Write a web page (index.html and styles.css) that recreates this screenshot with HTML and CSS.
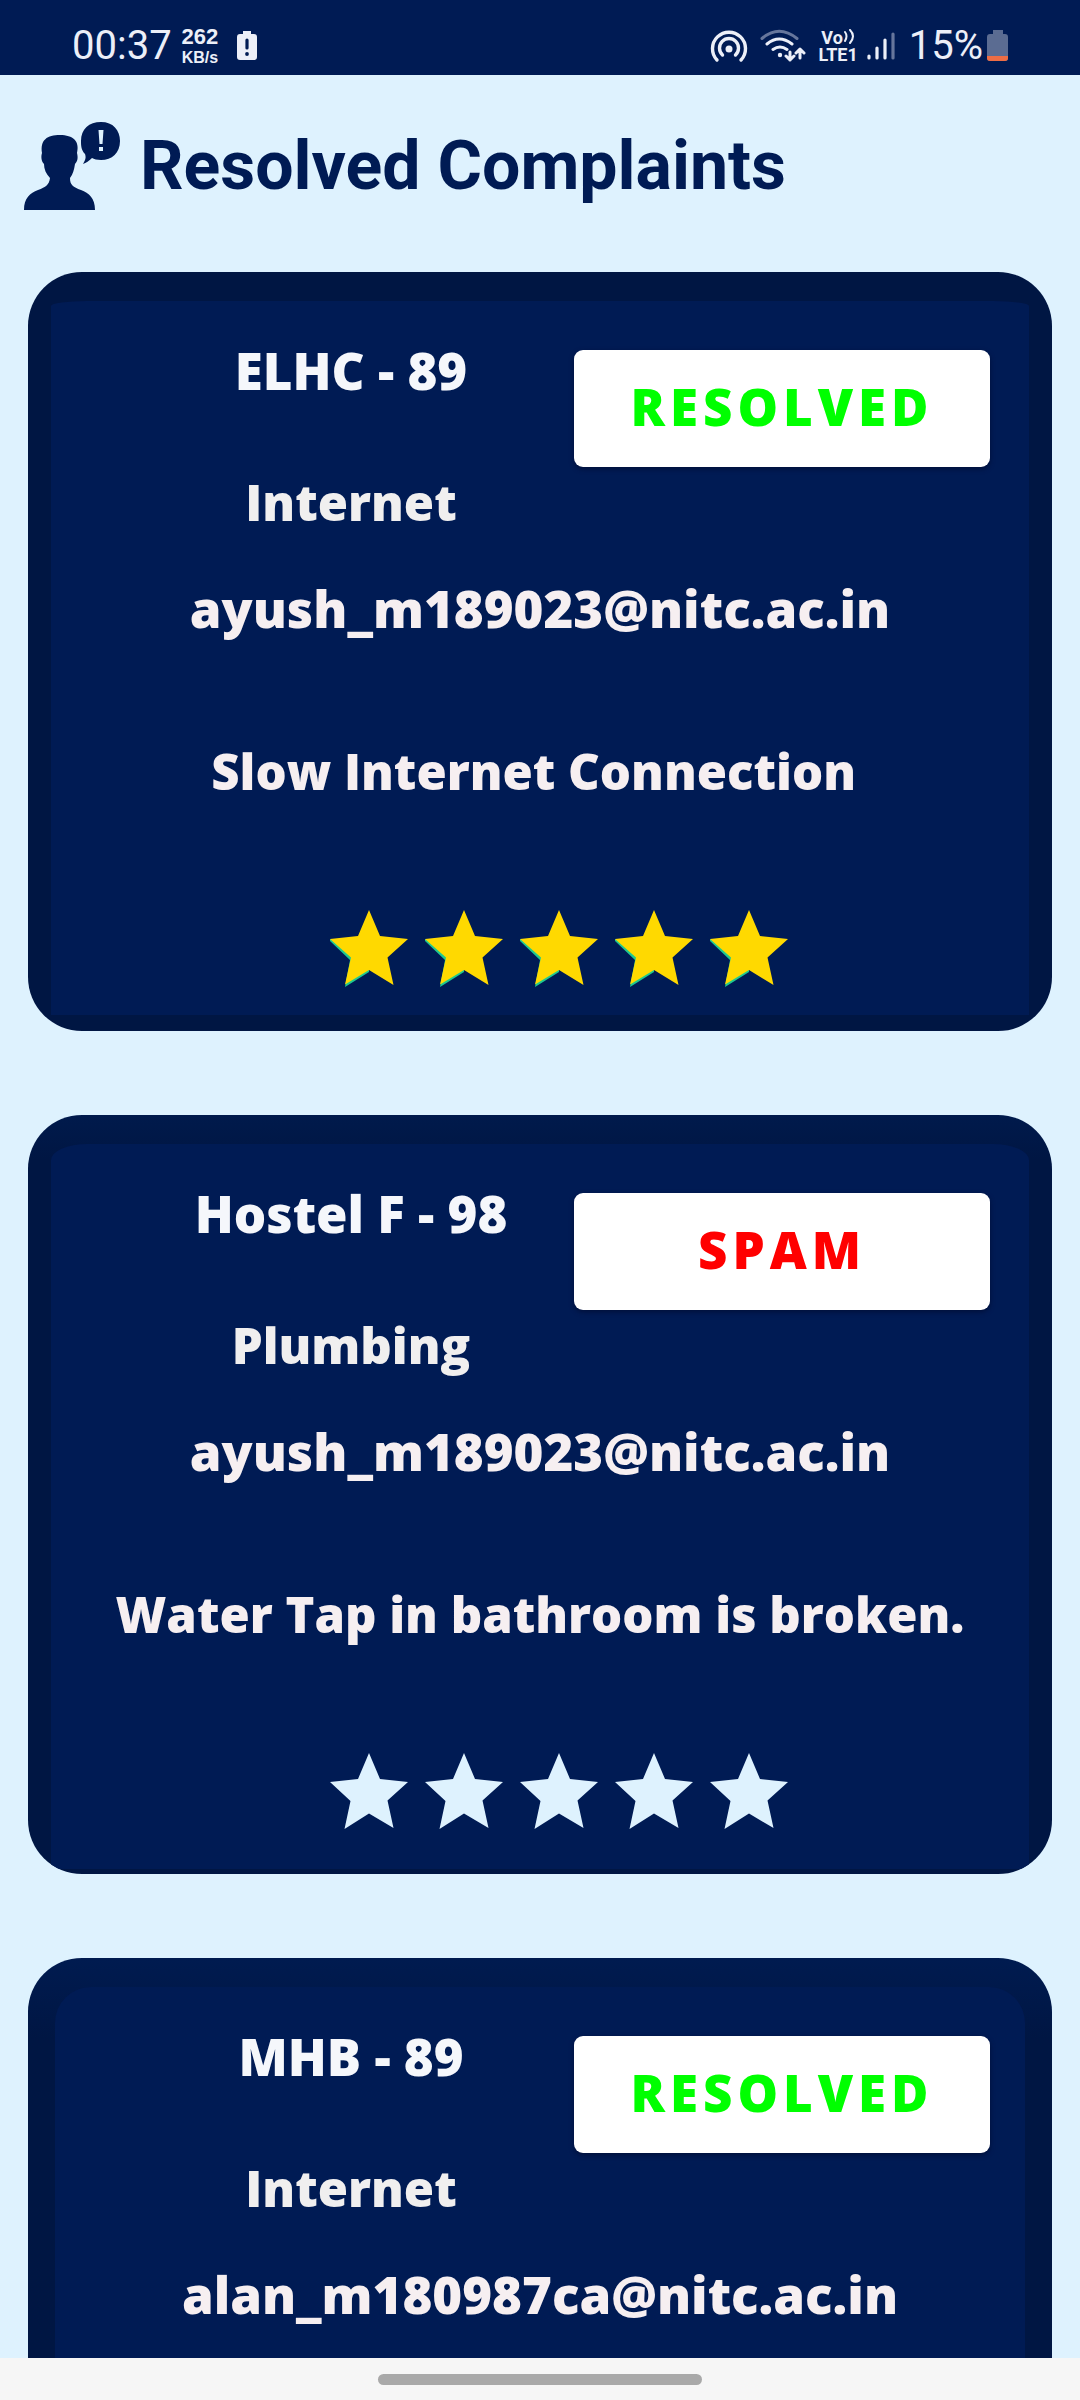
FILE: index.html
```html
<!DOCTYPE html>
<html lang="en">
<head>
<meta charset="utf-8">
<meta name="viewport" content="width=device-width, initial-scale=1">
<title>Resolved Complaints</title>
<link rel="stylesheet" href="styles.css">
</head>
<body>
<svg class="defs" aria-hidden="true">
  <symbol id="star" viewBox="0 0 80 78">
    <path d="M40 0 51 26 79 29 58.500 47.500 64.500 75 40 60.500 15.500 76 21.500 48 1 29 29 26Z"/>
  </symbol>
  <symbol id="star-rated" viewBox="0 0 80 78">
    <path fill="#1fc98f" d="M1 29 1 31 21 50 16 77 40 62 40 40Z"/>
    <path d="M40 0 51 26 79 29 58.500 47.500 64.500 75 40 60 16 74.500 22 47.500 1 29 29 26Z"/>
  </symbol>
</svg>
<div class="screen">
  <div class="status">
    <div class="status-side">
      <span class="clock">00:37</span>
      <span class="speed"><span class="speed-value">262</span><span class="speed-unit">KB/s</span></span>
      <svg class="alert" width="22" height="32" viewBox="0 0 22 32" aria-hidden="true">
        <path fill="#eceff8" d="M7 1h8v3h3q3 0 3 3v20q0 3-3 3H4q-3 0-3-3V7q0-3 3-3h3z"/>
        <path stroke="#001b54" stroke-width="3.200" stroke-linecap="round" d="M11 10v8"/>
        <circle cx="11" cy="24" r="1.900" fill="#001b54"/>
      </svg>
    </div>
    <div class="status-side status-right">
      <svg width="38" height="34" viewBox="0 0 38 34" fill="none" stroke="#eceff8" stroke-width="3.400" stroke-linecap="round" aria-hidden="true">
        <path d="M7 31a16.500 16.500 0 1 1 24 0M12.500 26a9.500 9.500 0 1 1 13 0"/>
        <circle cx="19" cy="20" r="3.500" fill="#eceff8" stroke="none"/>
      </svg>
      <svg class="wifi" width="46" height="34" viewBox="0 0 46 34" fill="none" stroke="#eceff8" stroke-width="3" stroke-linecap="round" stroke-linejoin="round" aria-hidden="true">
        <path stroke="#66769c" d="M2 9.500Q19-5 37 9.500"/>
        <path d="M7 15q12-10 25 0M13 20.500q7-5 14 0M30 23v8m-4-4 4 4 4-4M40 29v-9m-4 4 4-4 4 4"/>
        <circle cx="20" cy="26" r="2.200" fill="#eceff8" stroke="none"/>
      </svg>
      <span class="volte">
        <span class="volte-line">Vo<svg width="12" height="16" viewBox="0 0 12 16" fill="none" stroke="#eceff8" stroke-width="2" stroke-linecap="round" aria-hidden="true"><path d="M2 3q3 4 0 9M7 1q6 6 0 13"/></svg></span>
        <span class="volte-line">LTE1</span>
      </span>
      <svg width="28" height="32" viewBox="0 0 28 32" fill="none" stroke="#eceff8" stroke-width="3.200" stroke-linecap="round" aria-hidden="true">
        <path d="M2 26v2M10 18v10M18 10v18"/>
        <path stroke="#66769c" d="M26 4v24"/>
      </svg>
      <span class="clock percent">15%</span>
      <svg class="battery" width="22" height="33" viewBox="0 0 22 33" aria-hidden="true">
        <path fill="#5b6c92" d="M6 1h10v4h2q3 0 3 3v21q0 3-3 3H3q-3 0-3-3V8q0-3 3-3h3z"/>
        <path fill="#ed6d45" d="M0 27h21v2q0 3-3 3H3q-3 0-3-3z"/>
      </svg>
    </div>
  </div>

  <main class="content">
    <header class="header">
      <svg width="98" height="90" viewBox="0 0 98 90" fill="#001b54" aria-hidden="true">
        <path d="M1 89C1 77 7 72 15 69 23 66 26 64 27 57 23 53 21 48 21 43 18 40 18 35 19 32 17 19 24 14 37 14 50 14 57 20 54 32 55 36 55 40 52 43 51 49 50 53 47 57 47 64 50 66 58 69 66 72 72 77 72 89Z"/>
        <path d="M60 43C63 38 63 36 62 33 58 29 58 24 58 20 58 8 66 1 78 1 90 1 97 9 97 20 97 32 89 39 78 39 74 39 71 38 69 37 66 40 63 42 60 43Z"/>
        <path fill="#def2fe" d="M75.500 9h5l-1 14h-3zM76 26h4v4h-4z"/>
      </svg>
      <h1 class="title">Resolved Complaints</h1>
    </header>

    <article class="card">
      <div class="head">
        <div class="place">
          <h2 class="line room">ELHC - 89</h2>
          <p class="line category">Internet</p>
        </div>
        <button class="badge resolved" type="button">RESOLVED</button>
      </div>
      <p class="line email">ayush_m189023@nitc.ac.in</p>
      <p class="line description">Slow Internet Connection&nbsp;</p>
      <div class="stars rated" role="img" aria-label="5 of 5 stars">
        <svg><use href="#star-rated"/></svg><svg><use href="#star-rated"/></svg><svg><use href="#star-rated"/></svg><svg><use href="#star-rated"/></svg><svg><use href="#star-rated"/></svg>
      </div>
    </article>

    <article class="card middle">
      <div class="head">
        <div class="place">
          <h2 class="line room">Hostel F - 98</h2>
          <p class="line category">Plumbing</p>
        </div>
        <button class="badge spam" type="button">SPAM</button>
      </div>
      <p class="line email">ayush_m189023@nitc.ac.in</p>
      <p class="line description">Water Tap in bathroom is broken.</p>
      <div class="stars" role="img" aria-label="Not rated">
        <svg><use href="#star"/></svg><svg><use href="#star"/></svg><svg><use href="#star"/></svg><svg><use href="#star"/></svg><svg><use href="#star"/></svg>
      </div>
    </article>

    <article class="card last">
      <div class="head">
        <div class="place">
          <h2 class="line room">MHB - 89</h2>
          <p class="line category">Internet</p>
        </div>
        <button class="badge resolved" type="button">RESOLVED</button>
      </div>
      <p class="line email">alan_m180987ca@nitc.ac.in</p>
    </article>
  </main>

  <div class="navbar"><div class="handle"></div></div>
</div>
</body>
</html>
```
FILE: styles.css
```css
* {
  box-sizing: border-box;
}

body {
  margin: 0;
  background: #def2fe;
  font-family: Roboto, sans-serif;
}

.defs {
  display: none;
}

.screen {
  display: flex;
  flex-direction: column;
  height: 100vh;
}

/* Status bar */
.status {
  flex: none;
  display: flex;
  justify-content: space-between;
  padding: 16px 71px 0 72px;
  height: 75px;
  background: #001b54;
  color: #eceff8;
}

.status-side {
  display: flex;
  align-items: center;
  height: 59px;
}

.clock {
  font-size: 40px;
  line-height: 48px;
}

.speed {
  display: flex;
  flex-direction: column;
  align-items: center;
  margin-left: 10px;
  font-family: "Liberation Sans", sans-serif;
  font-weight: 700;
}

.speed-value {
  font-size: 22px;
  line-height: 24px;
}

.speed-unit {
  font-size: 16px;
  line-height: 18px;
}

.alert {
  margin-left: 18px;
}

.wifi {
  margin-left: 12px;
}

.volte {
  display: flex;
  flex-direction: column;
  align-items: center;
  margin: 0 9px 0 12px;
  font-size: 18px;
  font-weight: 700;
  line-height: 17px;
}

.volte-line {
  display: flex;
}

.percent {
  margin-left: 14px;
}

.battery {
  margin-left: 4px;
}

/* Page */
.content {
  flex: 1;
  min-height: 0;
  overflow-y: auto;
  scrollbar-width: none;
  padding: 0 28px;
}

.header {
  display: flex;
  align-items: center;
  gap: 19px;
  height: 197px;
  margin-left: -5px;
  padding-bottom: 16px;
  color: #001b54;
}

.title {
  margin: 0;
  font-size: 68px;
  font-weight: 700;
  line-height: 80px;
}

.card {
  position: relative;
  z-index: 0;
  overflow: hidden;
  min-height: 759px;
  margin-bottom: 84px;
  padding: 68px 0 43px;
  border-radius: 54px;
  background: #001643;
  color: #f6eff1;
  font-family: "Open Sans", sans-serif;
  font-size: 51px;
  font-weight: 800;
}

/* Lighter face inside the shaded rim */
.card::before {
  content: "";
  position: absolute;
  z-index: -1;
  inset: 29px 23px 16px;
  border-radius: 36px 36px 0 0 / 5px 5px 0 0;
  background: #001b54;
}

.card.middle {
  background: linear-gradient(#001a4c, #001643 44px);
}

.card.middle::before {
  bottom: 5px;
  border-radius: 36px 36px 0 0 / 16px 16px 0 0;
}

.card.last {
  background: linear-gradient(#001b50, #001643 80px);
}

.card.last::before {
  inset: 29px 27px 0;
  border-radius: 36px 36px 0 0;
}

.head {
  display: grid;
  grid-template-columns: 446fr 416fr;
  align-items: start;
  padding: 0 62px 0 100px;
}

.line {
  margin: 0;
  font-size: 51px;
  font-weight: 800;
  line-height: 60px;
  text-align: center;
}

.room {
  color: #f5f7fb;
}

.category {
  margin-top: 72px;
  color: #f0efef;
  font-size: 49px;
}

.email {
  margin-top: 46px;
}

.description {
  margin-top: 103px;
  font-size: 49px;
}

.badge {
  height: 117px;
  margin-top: 10px;
  padding: 0 0 6px;
  border: 0;
  border-radius: 9px;
  background: #fff;
  box-shadow: 0 2px 5px #00103a;
  font: inherit;
  letter-spacing: 5px;
}

.resolved {
  color: #00ff00;
}

.spam {
  color: #ff0000;
}

.stars {
  display: flex;
  justify-content: center;
  gap: 15px;
  margin-top: 109px;
  padding: 0 62px 0 100px;
  fill: #def2fe;
}

.stars.rated {
  fill: #ffd900;
}

.stars svg {
  width: 80px;
  height: 78px;
}

/* Gesture bar */
.navbar {
  flex: none;
  display: flex;
  justify-content: center;
  padding-top: 16px;
  height: 42px;
  background: #f6f6f6;
}

.handle {
  width: 30%;
  height: 11px;
  border-radius: 6px;
  background: #a9a9a9;
}
```
